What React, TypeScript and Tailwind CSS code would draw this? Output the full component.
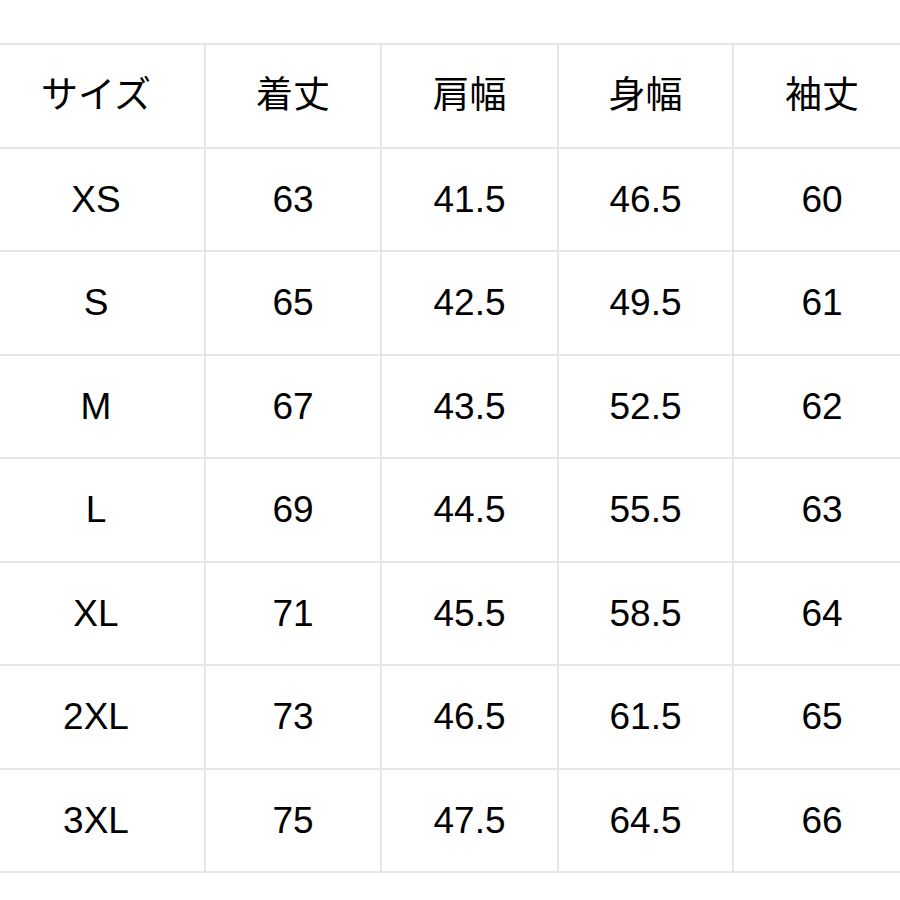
const header = ["サイズ", "着丈", "肩幅", "身幅", "袖丈"];

const rows = [
  ["XS", "63", "41.5", "46.5", "60"],
  ["S", "65", "42.5", "49.5", "61"],
  ["M", "67", "43.5", "52.5", "62"],
  ["L", "69", "44.5", "55.5", "63"],
  ["XL", "71", "45.5", "58.5", "64"],
  ["2XL", "73", "46.5", "61.5", "65"],
  ["3XL", "75", "47.5", "64.5", "66"],
];

function Row({ cells }: { cells: string[] }) {
  return (
    <div className="grid grid-cols-[218px_176px_177px_175px_176px] h-[103.5px] border-b-2 border-[#e6e6e6]">
      {cells.map((c, i) => (
        <div
          key={i}
          className={
            "flex items-center justify-center text-[37px] text-black " +
            (i < 4 ? "border-r-2 border-[#e6e6e6]" : "")
          }
        >
          {c}
        </div>
      ))}
    </div>
  );
}

export default function App() {
  return (
    <div
      className="w-[900px] h-[900px] bg-white overflow-hidden pt-[43px]"
      style={{ fontFamily: '"Liberation Sans", "Noto Sans CJK JP", sans-serif' }}
    >
      <div className="-ml-[12px] w-[922px] border-t-2 border-[#e6e6e6]">
        <Row cells={header} />
        {rows.map((r) => (
          <Row key={r[0]} cells={r} />
        ))}
      </div>
    </div>
  );
}
